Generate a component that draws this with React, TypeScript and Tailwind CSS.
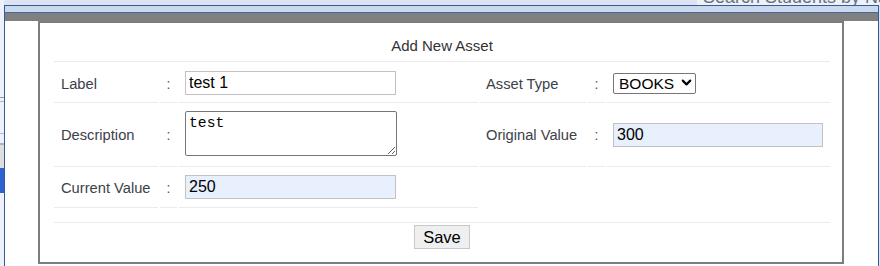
import * as React from "react";
import { ChevronDown } from "lucide-react";

const cell = "flex items-center border-b border-[#ebebeb]";

function Label({ children, right, lower }: { children: React.ReactNode; right?: boolean; lower?: boolean }) {
  return (
    <div
      className={`${cell} ${right ? "pl-[6px]" : "pl-[7px]"} ${lower ? "pt-[2px]" : ""} text-[14.7px] text-[#3d4148]`}
    >
      {children}
    </div>
  );
}

function Colon({ lower }: { lower?: boolean }) {
  return <div className={`${cell} justify-center ${lower ? "pt-[2px]" : ""} text-[14px] text-[#555]`}>:</div>;
}

export default function App() {
  return (
    <div className="relative h-[266px] w-[880px] overflow-hidden bg-[#dfe2f2] font-['Liberation_Sans',Arial,sans-serif]">
      {/* page behind the dialog */}
      <div className="absolute left-0 top-0 h-[266px] w-[4px] bg-[#eef0fb]">
        <div className="mt-[97px] h-px bg-[#9a9a9a]" />
        <div className="mt-[3px] h-px bg-[#b5b5b5]" />
        <div className="mt-[31px] h-px bg-[#bbbbbb]" />
        <div className="mt-[9px] h-[2px] bg-[#9fb6dc]" />
        <div className="h-[23px] bg-[#dedede]" />
        <div className="h-[25px] bg-[#2d62cf]" />
      </div>
      <div className="absolute right-0 top-0 h-[5px] w-[183px] overflow-hidden bg-[#eff1fa]">
        <div className="-mt-[12px] pl-[6px] text-[18px] leading-[18px] whitespace-nowrap text-[#6b7180]">
          Search Students by Name
        </div>
      </div>

      {/* dialog */}
      <div className="absolute left-[4px] top-[5px] flex h-[275px] w-[875px] flex-col border border-[#2f5d9c] bg-white">
        <div className="h-[7px] border-b border-[#47699e] bg-[#cad9ee]" />
        <div className="h-[8px] bg-[#808080]" />
        <div className="flex-1 pl-[33px]">
          <div className="h-[243px] w-[806px] border-2 border-[#7d7d7d] pl-[14px] pt-[2px]">
            <div className="grid w-[776px] grid-cols-[104px_17px_299px_106px_17px_223px] gap-[2px]">
              <div className="col-span-6 h-[37px] border-b border-[#ebebeb] pt-[12px] text-center text-[15px] leading-[17px] text-[#333]">
                Add New Asset
              </div>

              {/* row 1 */}
              <Label lower>Label</Label>
              <Colon lower />
              <div className={`${cell} h-[39px] pl-[6px]`}>
                <input
                  defaultValue="test 1"
                  className="h-[24px] w-[211px] border border-[#c2c2c2] bg-white pl-[3px] text-[16px] text-black outline-none"
                />
              </div>
              <Label right lower>Asset Type</Label>
              <Colon lower />
              <div className={`${cell} pl-[6px] pt-[2px]`}>
                <div className="relative">
                  <select
                    defaultValue="BOOKS"
                    className="h-[21px] w-[83px] appearance-none rounded-[2px] border border-[#767676] bg-white pl-[5px] text-[15.5px] leading-[19px] text-black outline-none"
                  >
                    <option>BOOKS</option>
                  </select>
                  <ChevronDown
                    size={15}
                    strokeWidth={3.4}
                    className="pointer-events-none absolute right-[2px] top-[3px] text-black"
                  />
                </div>
              </div>

              {/* row 2 */}
              <Label>Description</Label>
              <Colon />
              <div className={`${cell} h-[62px] pb-[4px] pl-[6px]`}>
                <textarea
                  defaultValue="test"
                  className="h-[45px] w-[212px] rounded-[2px] border border-[#767676] bg-white px-[3px] pt-[3px] font-['Liberation_Mono',monospace] text-[14.7px] leading-[17px] text-black outline-none"
                />
              </div>
              <Label right>Original Value</Label>
              <Colon />
              <div className={`${cell} pb-[2px] pl-[6px]`}>
                <input
                  defaultValue="300"
                  className="h-[24px] w-[210px] border border-[#c2c2c2] bg-[#e8f0fe] pl-[3px] text-[16px] text-black outline-none"
                />
              </div>

              {/* row 3 */}
              <Label>Current Value</Label>
              <Colon />
              <div className={`${cell} h-[39px] pb-[2px] pl-[6px]`}>
                <input
                  defaultValue="250"
                  className="h-[24px] w-[211px] border border-[#c2c2c2] bg-[#e8f0fe] pl-[3px] text-[16px] text-black outline-none"
                />
              </div>
              <div />
              <div />
              <div />

              {/* save */}
              <div className="col-span-6 mt-[12px] flex justify-center border-t border-[#ebebeb] pt-[2px]">
                <button className="h-[24px] w-[56px] border border-[#c8c8c8] bg-[#efefef] text-[16.5px] leading-[20px] text-black">
                  Save
                </button>
              </div>
            </div>
          </div>
        </div>
      </div>
    </div>
  );
}
